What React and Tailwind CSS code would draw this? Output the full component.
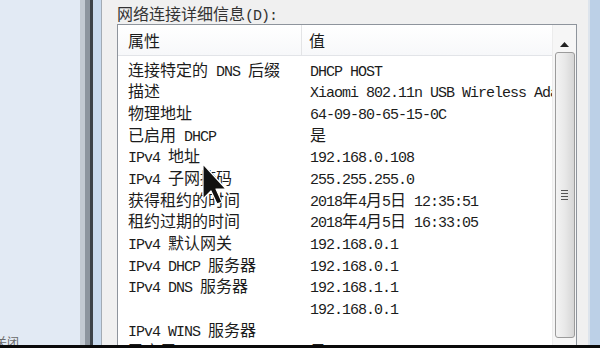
import React from 'react';

// 网络连接详细信息 dialog (Win7 style), zoomed screenshot
const ROWS = [
    ['连接特定的 DNS 后缀', 'DHCP HOST'],
    ['描述', 'Xiaomi 802.11n USB Wireless Adapter'],
    ['物理地址', '64-09-80-65-15-0C'],
    ['已启用 DHCP', '是'],
    ['IPv4 地址', '192.168.0.108'],
    ['IPv4 子网掩码', '255.255.255.0'],
    ['获得租约的时间', '2018年4月5日 12:35:51'],
    ['租约过期的时间', '2018年4月5日 16:33:05'],
    ['IPv4 默认网关', '192.168.0.1'],
    ['IPv4 DHCP 服务器', '192.168.0.1'],
    ['IPv4 DNS 服务器', '192.168.1.1'],
    ['', '192.168.0.1'],
    ['IPv4 WINS 服务器', ''],
    ['已启用 NetBIOS', '是'],
];

const CJK = /([\u3000-\u9fff\uff00-\uffef]+)/;

// SimSun-like mix: CJK full width, latin half width
const Txt = ({ children }) => {
    const parts = String(children).split(CJK).filter(Boolean);
    return (
        <span className="whitespace-pre leading-[18px]">
            {parts.map((p, i) =>
                CJK.test(p) ? (
                    <span key={i} className="font-['Noto_Sans_CJK_SC',sans-serif] text-[16px] leading-[18px]">{p}</span>
                ) : (
                    <span key={i} className="font-['Liberation_Mono',monospace] text-[15px] leading-[18px] tracking-[-1px]">{p}</span>
                )
            )}
        </span>
    );
};

const Cursor = () => (
    <svg className="absolute left-[201px] top-[162px]" width="28" height="46" viewBox="0 0 28 46">
        <polygon
            points="2,2 2,37 10,29 16,42 21,40 15,27 25,27"
            fill="#111"
            stroke="#fff"
            strokeWidth="1.2"
            strokeLinejoin="round"
        />
    </svg>
);

const Scrollbar = () => (
    <div className="w-[24px] shrink-0 flex flex-col items-center bg-[#f6f6f6] border-l border-[#ececec]">
        <div className="h-[26px] flex items-end justify-center pb-[4px]">
            <svg width="9" height="5" viewBox="0 0 9 5"><polygon points="0,5 4.5,0 9,5" fill="#222" /></svg>
        </div>
        <div className="mt-[1px] w-[20px] h-[286px] rounded-[3px] border border-[#9b9b9b] bg-gradient-to-r from-[#f3f3f3] via-[#e8e8e8] to-[#d6d6d6] flex flex-col items-center justify-center gap-[2px]">
            <div className="w-[7px] h-px bg-[#555]" />
            <div className="w-[7px] h-px bg-[#555]" />
            <div className="w-[7px] h-px bg-[#555]" />
            <div className="w-[7px] h-px bg-[#555]" />
        </div>
    </div>
);

const App = () => (
    <div className="relative w-[600px] h-[348px] overflow-hidden flex flex-col text-[#1c1c1c]">
        <div className="flex-1 flex min-h-0">
            {/* desktop / window behind */}
            <div className="w-[80px] shrink-0 bg-[#e2eaf4] flex flex-col justify-end overflow-hidden">
                <div className="-ml-[5px] -mb-[4px] text-[12px] text-[#6a6a6a] font-['Noto_Sans_CJK_SC',sans-serif] leading-[14px]">关闭</div>
            </div>
            <div className="w-[5px] shrink-0 bg-[#c3cad2]" />
            <div className="w-[5px] shrink-0 bg-[#8d959e]" />
            <div className="w-[3px] shrink-0 bg-[#3b4249]" />
            <div className="w-[8px] shrink-0 bg-[#c8daee]" />
            <div className="w-px shrink-0 bg-[#a3abb3]" />

            {/* dialog */}
            <div className="flex-1 min-w-0 bg-[#f0f0f0] pl-[15px] pr-[11px] flex flex-col min-h-0">
                <div className="h-[24px] pt-[2px] text-[#333]">
                    <Txt>网络连接详细信息(D):</Txt>
                </div>
                <div className="flex-1 min-h-0 flex border border-[#8e949c] border-b-0 bg-white overflow-hidden">
                    <div className="flex-1 min-w-0 flex flex-col">
                        <div className="h-[31px] shrink-0 flex border-b border-[#e2e4e8] bg-gradient-to-b from-white to-[#f7f8fa]">
                            <div className="w-[184px] shrink-0 pl-[10px] flex items-center border-r border-[#e3e4e6]">
                                <Txt>属性</Txt>
                            </div>
                            <div className="flex-1 pl-[7px] flex items-center">
                                <Txt>值</Txt>
                            </div>
                        </div>
                        <div className="pt-[3px]">
                            {ROWS.map(([k, v], i) => (
                                <div key={i} className="h-[21.67px] flex items-center">
                                    <div className="w-[184px] shrink-0 pl-[10px] overflow-hidden whitespace-nowrap">
                                        <Txt>{k}</Txt>
                                    </div>
                                    <div className="flex-1 min-w-0 pl-[8px] overflow-hidden whitespace-nowrap">
                                        <Txt>{v}</Txt>
                                    </div>
                                </div>
                            ))}
                        </div>
                    </div>
                    <Scrollbar />
                </div>
            </div>

            <div className="w-[2px] shrink-0 bg-[#dde4ec]" />
            <div className="w-[10px] shrink-0 bg-[#bcd0e7]" />
        </div>
        <div className="h-[3px] shrink-0 bg-[#0a0a0a]" />
        <Cursor />
    </div>
);

export default App;
